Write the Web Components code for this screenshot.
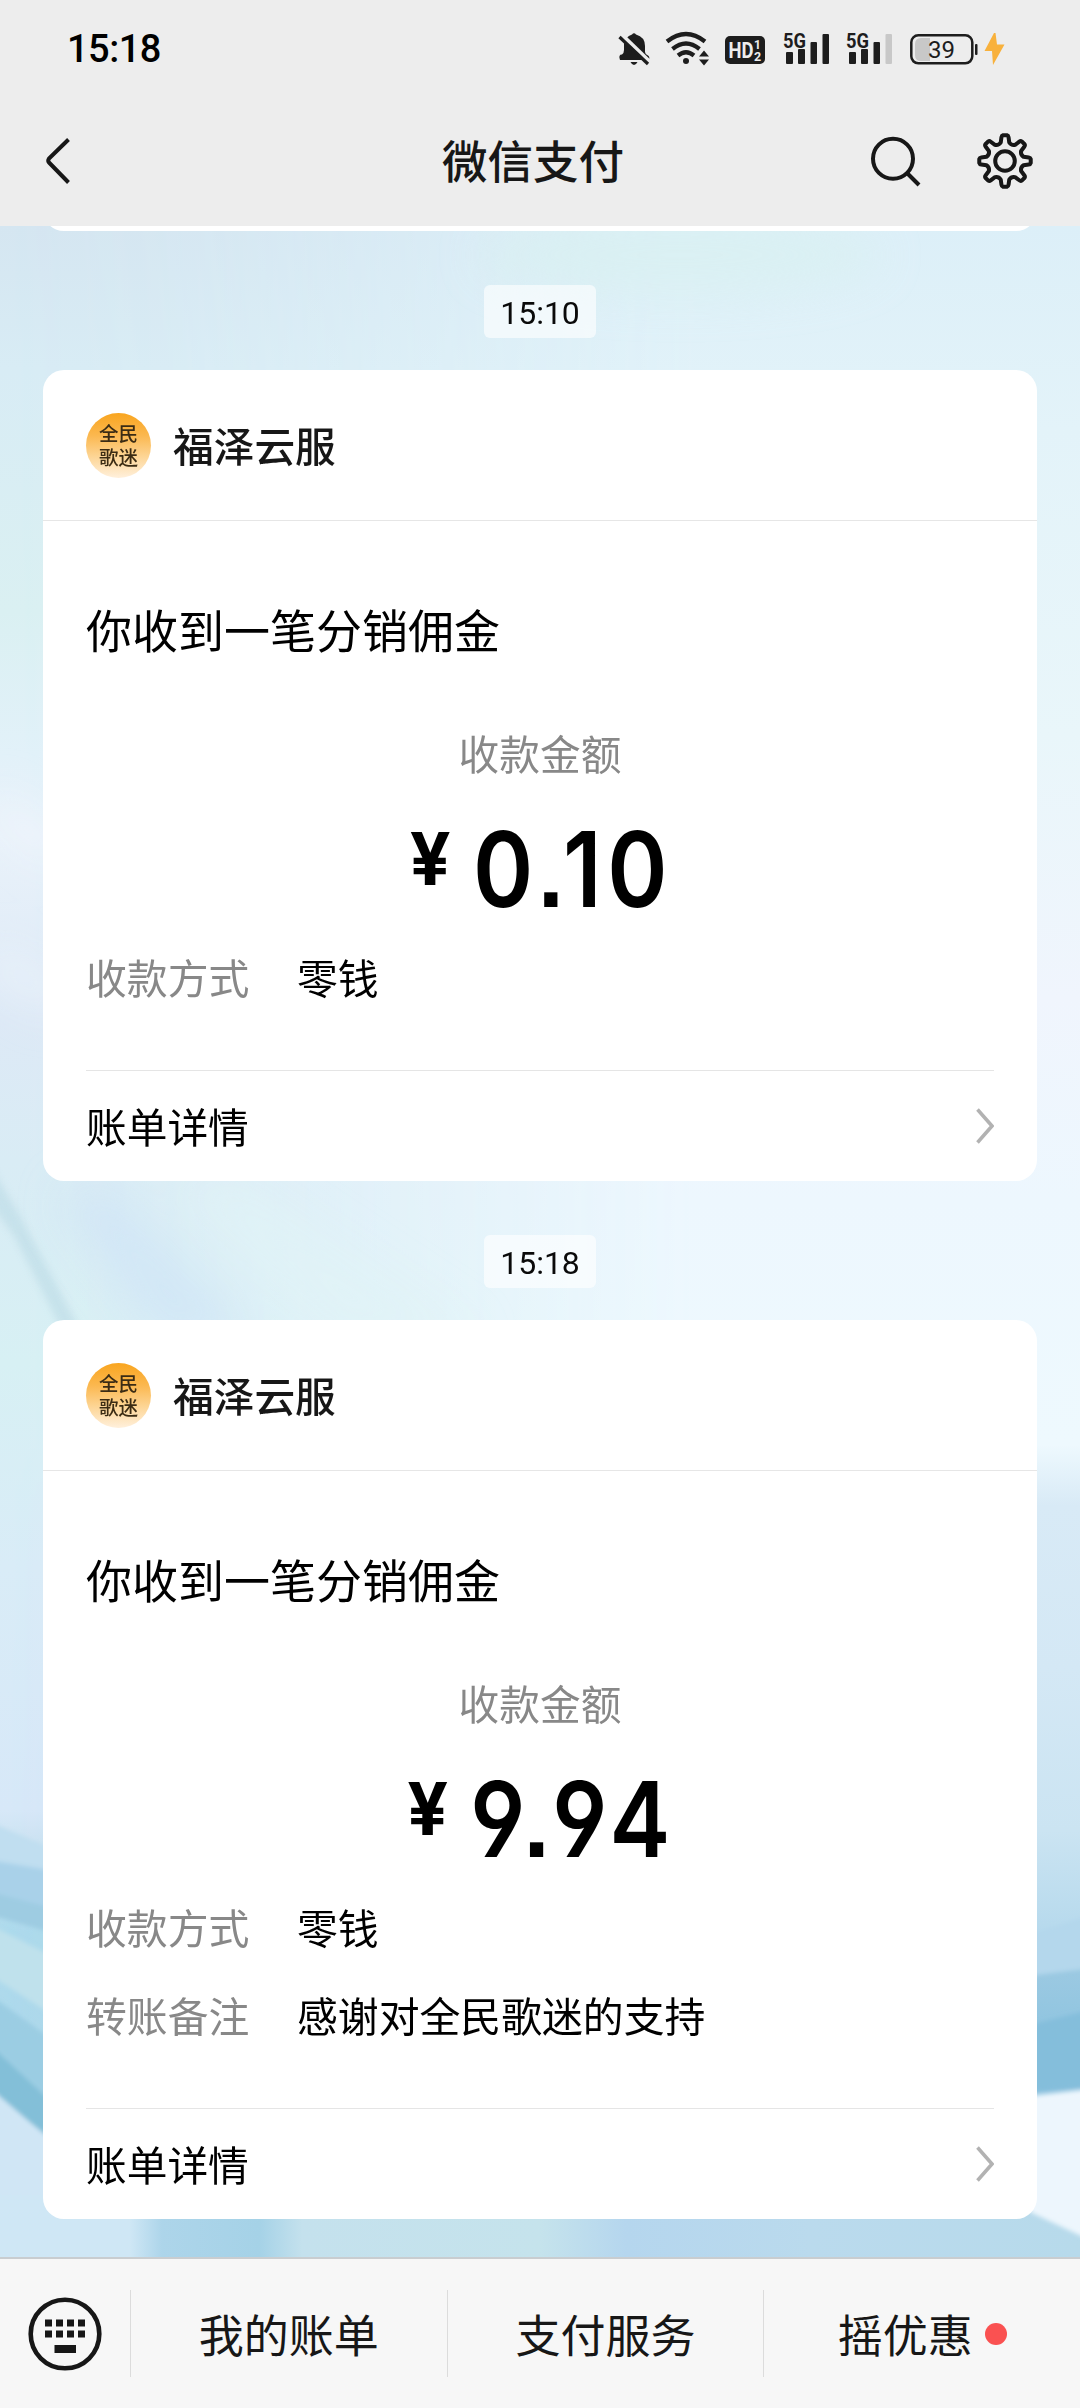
<!DOCTYPE html>
<html lang="zh-CN">
<head>
<meta charset="utf-8">
<title>微信支付</title>
<style>
html,body{margin:0;padding:0}
body{width:1080px;height:2408px;overflow:hidden;font-family:"Noto Sans CJK SC","Noto Sans",sans-serif;color:#000}
</style>
</head>
<body>
<wx-screen>
  <status-bar slot="top" time="15:18"></status-bar>
  <nav-bar slot="top">微信支付</nav-bar>
  <time-chip>15:10</time-chip>
  <pay-card name="福泽云服" heading="你收到一笔分销佣金" label="收款金额" amount="0.10">
    <pay-row label="收款方式">零钱</pay-row>
  </pay-card>
  <time-chip>15:18</time-chip>
  <pay-card name="福泽云服" heading="你收到一笔分销佣金" label="收款金额" amount="9.94">
    <pay-row label="收款方式">零钱</pay-row>
    <pay-row label="转账备注">感谢对全民歌迷的支持</pay-row>
  </pay-card>
  <tab-bar slot="bottom">
    <tab-item>我的账单</tab-item>
    <tab-item>支付服务</tab-item>
    <tab-item dot>摇优惠</tab-item>
  </tab-bar>
</wx-screen>
<script>
const define = (name, render) => customElements.define(name, class extends HTMLElement {
  constructor() {
    super();
    this.attachShadow({ mode: 'open' }).innerHTML = render(this);
  }
});

define('wx-screen', () => `
<style>
:host{display:flex;flex-direction:column;width:1080px;height:2408px;background:#ededed}
main{flex:1;min-height:0;position:relative;overflow:hidden;background:#e6f3fa}
.bg{position:absolute;inset:0;width:1080px;height:2031px}
.list{position:relative;display:flex;flex-direction:column;align-items:center}
.prev{width:994px;height:21px;margin-top:-16px;background:#fff;border-radius:0 0 21px 21px}
</style>
<slot name="top"></slot>
<main>
<svg class="bg" viewBox="0 226 1080 2031" preserveAspectRatio="none">
  <defs>
    <linearGradient id="l" x1="0" y1="226" x2="0" y2="2257" gradientUnits="userSpaceOnUse">
      <stop offset="0" stop-color="#d5e6f1"/><stop offset=".07" stop-color="#d8ecf5"/>
      <stop offset=".19" stop-color="#daf0f2"/><stop offset=".26" stop-color="#e2f1f9"/>
      <stop offset=".3" stop-color="#e9f2fa"/><stop offset=".39" stop-color="#dde9f6"/>
      <stop offset=".46" stop-color="#d9ecf5"/><stop offset=".56" stop-color="#d7f0f4"/>
      <stop offset=".66" stop-color="#d9ecf7"/><stop offset=".78" stop-color="#d7e8f8"/>
      <stop offset=".8" stop-color="#c9e2f0"/><stop offset=".84" stop-color="#addaec"/>
      <stop offset=".93" stop-color="#b0d9ec"/><stop offset="1" stop-color="#cfe6f5"/>
    </linearGradient>
    <linearGradient id="r" x1="0" y1="226" x2="0" y2="2257" gradientUnits="userSpaceOnUse">
      <stop offset="0" stop-color="#dceff8"/><stop offset=".1" stop-color="#e3f3f9"/>
      <stop offset=".25" stop-color="#e9f6fa"/><stop offset=".38" stop-color="#f0f5fd"/>
      <stop offset=".48" stop-color="#edf7fe"/><stop offset=".6" stop-color="#eef9fe"/>
      <stop offset=".63" stop-color="#d8eaf6"/><stop offset=".71" stop-color="#d4e8f5"/>
      <stop offset=".79" stop-color="#cbe4f2"/><stop offset=".845" stop-color="#b4d8ec"/>
      <stop offset=".86" stop-color="#9bc9e2"/><stop offset=".9" stop-color="#8bc3df"/>
      <stop offset="1" stop-color="#badaee"/>
    </linearGradient>
    <linearGradient id="m"><stop offset="0" stop-color="#000"/><stop offset=".15" stop-color="#222"/><stop offset=".65" stop-color="#fff"/></linearGradient>
    <mask id="k" maskUnits="userSpaceOnUse" x="0" y="226" width="1080" height="2031"><rect y="226" width="1080" height="2031" fill="url(#m)"/></mask>
    <linearGradient id="b">
      <stop offset="0" stop-color="#cfe7f5"/><stop offset=".12" stop-color="#cfe7f5"/>
      <stop offset=".15" stop-color="#add5ea"/><stop offset=".24" stop-color="#a5d2e7"/>
      <stop offset=".28" stop-color="#c4e1ed"/><stop offset=".5" stop-color="#c5e3ec"/>
      <stop offset=".58" stop-color="#b5d6ee"/><stop offset=".75" stop-color="#badaed"/><stop offset="1" stop-color="#b7daeb"/>
    </linearGradient>
    <filter id="s" x="-60%" y="-60%" width="220%" height="220%"><feGaussianBlur stdDeviation="22"/></filter>
    <filter id="f" x="-10%" y="-10%" width="120%" height="120%"><feGaussianBlur stdDeviation="2"/></filter>
    <filter id="g" x="-20%" y="-10%" width="140%" height="120%"><feGaussianBlur stdDeviation="3.5"/></filter>
  </defs>
  <rect y="226" width="1080" height="2031" fill="url(#l)"/>
  <rect y="226" width="1080" height="2031" fill="url(#r)" mask="url(#k)"/>
  <ellipse cx="680" cy="255" rx="200" ry="40" fill="#d9f1f1" opacity=".7" filter="url(#s)"/>
  <g filter="url(#s)">
    <path d="M-10 790 L60 840 V870 L-10 815Z" fill="#f0f5fc"/>
    <path d="M-10 940 L60 985 V1015 L-10 975Z" fill="#e9f2fa"/>
    <path d="M100 1181 L260 1340 H160 L60 1200Z" fill="#d0e5f6" opacity=".8"/>
    <path d="M240 1181 L480 1340 H340 L170 1181Z" fill="#e0f3f6" opacity=".8"/>
  </g>
  <path d="M-10 1166 L18 1212 L80 1330 L62 1330 L14 1236 L-10 1204Z" fill="#bddce6" opacity=".65" filter="url(#g)"/>
  <g filter="url(#f)">
    <path d="M-10 1822 L60 1852 V1885 L-10 1860Z" fill="#c0def0"/>
    <path d="M-10 1860 L60 1872 V1925 L-10 1890Z" fill="#a9d1e9"/>
    <path d="M-10 1892 L60 1910 V1935 L-10 1915Z" fill="#9ecce2"/>
    <path d="M-10 1925 L60 1960 V2020 L-10 1975Z" fill="#bfe1ec"/>
    <path d="M-10 1995 L60 2045 V2145 L-10 2095Z" fill="#9bcde3"/>
    <path d="M-10 2045 L60 2110 V2145 L-10 2092Z" fill="#83bfd8"/>
    <path d="M-10 2088 L60 2148 V2270 H-10Z" fill="#d0e6f5"/>
    <path d="M1030 1935 L1090 1915 V1968 L1030 1976Z" fill="#b4d7ec"/>
    <path d="M1030 2025 L1090 2010 V2088 L1030 2092Z" fill="#84bedb"/>
    <path d="M1030 2096 L1090 2089 V2238 L1030 2205Z" fill="#edf6fd"/>
  </g>
  <rect y="2212" width="1080" height="50" fill="url(#b)"/>
  <path d="M1030 2190 H1090 V2240 L1030 2212Z" fill="#edf6fd" filter="url(#f)"/>
  <rect y="2195" width="60" height="30" fill="#cfe7f5"/>
</svg>
<div class="list"><div class="prev"></div><slot></slot></div>
</main>
<slot name="bottom"></slot>`);

const signal = last => `
<svg width="48" height="36" viewBox="0 0 48 36" fill="#1d1d1d">
  <text x="0" y="17.5" font-family="Roboto" font-weight="700" font-size="20" textLength="23" lengthAdjust="spacingAndGlyphs">5G</text>
  <rect x="3" y="22" width="7" height="12" rx="1"/><rect x="15" y="19" width="7" height="15" rx="1"/>
  <rect x="27.500" y="12" width="6.500" height="22" rx="1"/><rect x="39.500" y="4" width="6.500" height="30" rx="1" fill="${last}"/>
</svg>`;

define('status-bar', el => `
<style>
:host{display:flex;align-items:center;height:96px;padding:0 72px 0 67px;box-sizing:border-box;font-family:Roboto,sans-serif}
.t{font-size:38px;font-weight:500;line-height:44px;letter-spacing:-.5px;padding-top:2px;flex:1}
.i{display:flex;align-items:center}
svg{display:block}
</style>
<span class="t">${el.getAttribute('time')}</span>
<div class="i">
<svg width="34" height="36" viewBox="0 0 34 36" style="margin-right:14px">
  <path d="M15 4.500Q17 2 19 4.500Q28 7 28 16V22Q28 24 31 25.500Q33 26.500 32 30H3Q1 24.500 5 24.500Q7 23 7 20V14Q8 7 15 4.500Z" fill="#1d1d1d"/>
  <path d="M13.500 32h7q-1.500 3-3.500 3t-3.500-3Z" fill="#1d1d1d"/>
  <path d="M5 5L35 34" stroke="#ededed" stroke-width="4"/><path d="M2.500 7L31 34" stroke="#1d1d1d" stroke-width="3.200"/>
</svg>
<svg width="46" height="36" viewBox="0 0 46 36" fill="none" stroke="#1d1d1d" stroke-width="4.200" style="margin-right:14px">
  <path d="M2 11.500Q21 -3.500 40 11.500"/><path d="M7.500 19Q21 8 34.500 19"/><path d="M13 25.500Q21 19 29 25.500"/>
  <circle cx="21" cy="31" r="3" fill="#1d1d1d" stroke="none"/>
  <path d="M34 26.500l5-6 5 6zM34 29.500h10l-5 6z" fill="#1d1d1d" stroke="none"/>
</svg>
<svg width="40" height="36" viewBox="0 0 40 36" style="margin-right:18px" font-family="Roboto" font-weight="700" fill="#ededed">
  <rect y="6" width="40" height="28" rx="5" fill="#1d1d1d"/>
  <text x="3.500" y="28" font-size="22" textLength="25" lengthAdjust="spacingAndGlyphs">HD</text>
  <text x="29" y="19" font-size="12">1</text><text x="29" y="31" font-size="12.500">2</text>
</svg>
${signal('#1d1d1d')}<span style="width:15px"></span>${signal('#c8c8c8')}
<svg width="98" height="36" viewBox="0 0 98 36" style="margin-left:16px">
  <path d="M5 14q0-6 6-6h9v23h-9q-6 0-6-6z" fill="#c8c8c8"/>
  <rect x="1.300" y="5.300" width="61" height="28" rx="7" fill="none" stroke="#1d1d1d" stroke-width="2.500"/>
  <rect x="65" y="14" width="2.500" height="11" rx="1" fill="#1d1d1d"/>
  <text x="18" y="28" font-family="Roboto" font-size="24" fill="#1d1d1d" textLength="27">39</text>
  <path d="M84 3L74.500 21H82L83 35L94.500 14.500H87L85.500 3Z" fill="#f8b13c"/>
</svg>
</div>`);

const gear = () => {
  const p = (r, d) => { const a = d * Math.PI / 180; return (32 + r * Math.sin(a)).toFixed(2) + ' ' + (32 - r * Math.cos(a)).toFixed(2); };
  let d = '';
  for (let i = 0; i < 8; i++) {
    const a = i * 45;
    d += `${i ? 'L' : 'M'}${p(19, a - 13)}L${p(24, a - 8.500)}Q${p(25.6, a - 7.500)} ${p(25.8, a - 4.500)}L${p(25.8, a + 4.500)}Q${p(25.6, a + 7.500)} ${p(24, a + 8.500)}L${p(19, a + 13)}Q${p(16.6, a + 22.500)} ${p(19, a + 32)}`;
  }
  return d + 'Z';
};

define('nav-bar', () => `
<style>
:host{display:flex;align-items:center;height:130px;padding:0 43px;box-sizing:border-box}
svg{display:block;flex:none;fill:none;stroke:#171717;stroke-width:4}
.side{width:180px;display:flex}.r{justify-content:flex-end;gap:49px}
h1{flex:1;margin:0 14px 5px 0;text-align:center;font-size:45.500px;font-weight:500;line-height:66px;color:#171717}
</style>
<div class="side"><svg width="30" height="50" viewBox="0 0 30 50"><path d="M25.500 3.500L6 22.500Q4.500 25 6 26.500L25.500 46.500"/></svg></div>
<h1><slot></slot></h1>
<div class="side r">
<svg width="64" height="64" viewBox="0 0 64 64"><circle cx="33" cy="29.700" r="20"/><path d="M47 44L59 56"/></svg>
<svg width="64" height="64" viewBox="0 0 64 64"><path d="${gear()}" stroke-linejoin="round"/><circle cx="32" cy="32" r="9.800"/></svg>
</div>`);

define('time-chip', () => `
<style>
:host{display:block;margin:54px 0 32px;height:53px;width:112px;border-radius:6px;background:rgba(255,255,255,.62);font:32px/56px Roboto,sans-serif;text-align:center;color:#0a0a0a}
</style><slot></slot>`);

define('brand-avatar', () => `
<style>
:host{display:flex;flex-direction:column;align-items:center;justify-content:center;width:65px;height:65px;border-radius:50%;background:linear-gradient(#f9a51f,#fbb850 35%,#fdd697 68%,#fff0dc);font-size:19.500px;line-height:24px;color:#3b2c14}
</style><span>全民</span><span>歌迷</span>`);

define('pay-card', el => `
<style>
:host{display:block;width:994px;background:#fff;border-radius:21px;box-sizing:border-box}
header{display:flex;align-items:center;gap:22px;height:150px;padding-left:43px;border-bottom:1px solid #e6e6e6;font-size:40.700px;font-weight:500;color:#171717}
header span{line-height:60px}
.body{padding:74px 43px 63px;display:flex;flex-direction:column}
h2{margin:0;font-size:46px;font-weight:400;line-height:66px}
.label{margin-top:62px;text-align:center;font-size:40.700px;line-height:60px;color:#888}
.amt{display:flex;justify-content:center;height:128px;margin-top:22px;font-family:Inter,Roboto,sans-serif;font-feature-settings:"cv04","ss07";transform:scaleX(.87)}
.y{font-size:73px;font-weight:700;line-height:80px;margin-right:28px;margin-top:14px;transform:scaleX(1.13)}
.n{font-size:105px;font-weight:600;line-height:128px;letter-spacing:6.500px;margin-right:-6.500px}
.rows{display:flex;flex-direction:column;gap:28px;margin-top:14px}
footer{display:flex;justify-content:space-between;align-items:center;margin:0 43px;border-top:1px solid #e5e5e5;height:110px;font-size:40.700px}
footer span{line-height:60px}
svg{display:block}
</style>
<header><brand-avatar></brand-avatar><span>${el.getAttribute('name')}</span></header>
<div class="body">
  <h2>${el.getAttribute('heading')}</h2>
  <div class="label">${el.getAttribute('label')}</div>
  <div class="amt"><span class="y">¥</span><span class="n">${el.getAttribute('amount')}</span></div>
  <div class="rows"><slot></slot></div>
</div>
<footer><span>账单详情</span><svg width="20" height="36" viewBox="0 0 20 36"><path d="M3.500 1.500L18 18L3.500 34.500" fill="none" stroke="#b2b2b2" stroke-width="3.500"/></svg></footer>`);

define('pay-row', el => `
<style>
:host{display:flex;font-size:40.850px;line-height:60px}
.k{width:211px;color:#888}
</style><span class="k">${el.getAttribute('label')}</span><slot></slot>`);

define('tab-bar', () => `
<style>
:host{display:flex;align-items:center;height:151px;box-sizing:border-box;background:#f7f7f7;border-top:2px solid #c9cdd0}
.kb{width:130px;display:flex;justify-content:center}
svg{display:block}
</style>
<div class="kb"><svg width="76" height="76" viewBox="0 0 76 76" fill="#171717">
<circle cx="38" cy="38" r="34.300" fill="none" stroke="#171717" stroke-width="4.600"/>
<path d="M18 23.500h7v7h-7zM29 23.500h7v7h-7zM40 23.500h7v7h-7zM51 23.500h7v7h-7zM18 34.500h7v7h-7zM29 34.500h7v7h-7zM40 34.500h7v7h-7zM51 34.500h7v7h-7zM27.500 49h21.500v8h-21.500z"/>
</svg></div><slot></slot>`);

define('tab-item', el => `
<style>
:host{flex:1;display:flex;align-items:center;justify-content:center;gap:12px;height:87px;border-left:1px solid #dcdcdc;font-size:45px;line-height:66px;color:#171717}
i{width:22px;height:22px;border-radius:50%;background:#fa5151}
</style><span><slot></slot></span>${el.hasAttribute('dot') ? '<i></i>' : ''}`);
</script>
</body>
</html>
